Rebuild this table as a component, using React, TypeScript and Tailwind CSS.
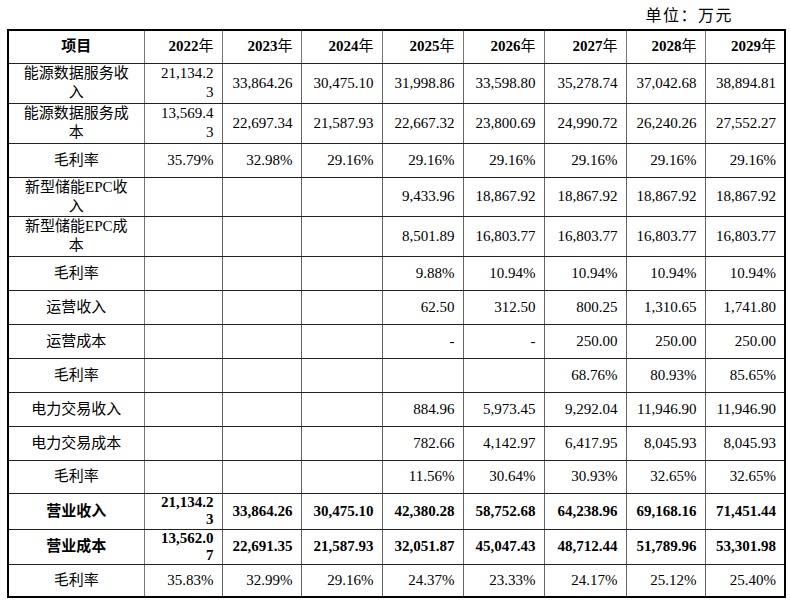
type Row = {
  label: string;
  values: string[];
  h: string;
  bold?: boolean;
  grayTop?: boolean;
};

const rows: Row[] = [
  {
    label: "能源数据服务收入",
    values: ["21,134.2|3", "33,864.26", "30,475.10", "31,998.86", "33,598.80", "35,278.74", "37,042.68", "38,894.81"],
    h: "h-[40px]",
  },
  {
    label: "能源数据服务成本",
    values: ["13,569.4|3", "22,697.34", "21,587.93", "22,667.32", "23,800.69", "24,990.72", "26,240.26", "27,552.27"],
    h: "h-[40px]",
  },
  {
    label: "毛利率",
    values: ["35.79%", "32.98%", "29.16%", "29.16%", "29.16%", "29.16%", "29.16%", "29.16%"],
    h: "h-[34px]",
  },
  {
    label: "新型储能EPC收入",
    values: ["", "", "", "9,433.96", "18,867.92", "18,867.92", "18,867.92", "18,867.92"],
    h: "h-[39px]",
  },
  {
    label: "新型储能EPC成本",
    values: ["", "", "", "8,501.89", "16,803.77", "16,803.77", "16,803.77", "16,803.77"],
    h: "h-[40px]",
    grayTop: true,
  },
  {
    label: "毛利率",
    values: ["", "", "", "9.88%", "10.94%", "10.94%", "10.94%", "10.94%"],
    h: "h-[34px]",
  },
  {
    label: "运营收入",
    values: ["", "", "", "62.50", "312.50", "800.25", "1,310.65", "1,741.80"],
    h: "h-[34px]",
  },
  {
    label: "运营成本",
    values: ["", "", "", "-", "-", "250.00", "250.00", "250.00"],
    h: "h-[34px]",
  },
  {
    label: "毛利率",
    values: ["", "", "", "", "", "68.76%", "80.93%", "85.65%"],
    h: "h-[34px]",
    grayTop: true,
  },
  {
    label: "电力交易收入",
    values: ["", "", "", "884.96", "5,973.45", "9,292.04", "11,946.90", "11,946.90"],
    h: "h-[34px]",
  },
  {
    label: "电力交易成本",
    values: ["", "", "", "782.66", "4,142.97", "6,417.95", "8,045.93", "8,045.93"],
    h: "h-[34px]",
  },
  {
    label: "毛利率",
    values: ["", "", "", "11.56%", "30.64%", "30.93%", "32.65%", "32.65%"],
    h: "h-[33px]",
  },
  {
    label: "营业收入",
    values: ["21,134.2|3", "33,864.26", "30,475.10", "42,380.28", "58,752.68", "64,238.96", "69,168.16", "71,451.44"],
    h: "h-[36px]",
    bold: true,
  },
  {
    label: "营业成本",
    values: ["13,562.0|7", "22,691.35", "21,587.93", "32,051.87", "45,047.43", "48,712.44", "51,789.96", "53,301.98"],
    h: "h-[35px]",
    bold: true,
  },
  {
    label: "毛利率",
    values: ["35.83%", "32.99%", "29.16%", "24.37%", "23.33%", "24.17%", "25.12%", "25.40%"],
    h: "h-[33px]",
  },
];

const years = ["2022", "2023", "2024", "2025", "2026", "2027", "2028", "2029"];

function Value({ text }: { text: string }) {
  if (text.includes("|")) {
    const [a, b] = text.split("|");
    return (
      <>
        {a}
        <br />
        {b}
      </>
    );
  }
  return <>{text}</>;
}

export default function App() {
  return (
    <div
      className="w-[790px] h-[605px] overflow-hidden bg-white px-[7px] text-black"
      style={{ fontFamily: '"Liberation Serif", "Noto Sans CJK SC", serif' }}
    >
      <div className="flex h-[29px] items-center justify-end pr-[50px] pt-[2px] text-[16px] tracking-[1.5px]">
        单位：万元
      </div>
      <table className="w-[777px] table-fixed border-collapse border-[2.5px] border-black text-[15px] leading-[19px]">
        <colgroup>
          <col className="w-[136px]" />
          <col className="w-[78px]" />
          <col className="w-[79px]" />
          <col className="w-[81px]" />
          <col className="w-[81px]" />
          <col className="w-[81px]" />
          <col className="w-[82px]" />
          <col className="w-[79px]" />
          <col className="w-[80px]" />
        </colgroup>
        <thead>
          <tr className="h-[33px]">
            <th className="border border-[#777] border-b-[#222] p-0 px-[12px] text-center font-bold">项目</th>
            {years.map((y) => (
              <th key={y} className="border border-[#777] border-b-[#222] p-0 pr-[8px] text-right font-bold">
                {y}
                <span className="font-normal">年</span>
              </th>
            ))}
          </tr>
        </thead>
        <tbody>
          {rows.map((r, i) => (
            <tr key={i} className={r.h}>
              <td
                className={`border border-x-[#777] p-0 px-[12px] text-center ${
                  r.grayTop ? "border-t-[#999]" : "border-t-[#222]"
                } border-b-[#222] ${r.bold ? "font-bold" : ""}`}
              >
                {r.label}
              </td>
              {r.values.map((v, j) => (
                <td
                  key={j}
                  className={`border border-x-[#666] p-0 pr-[8px] text-right align-middle ${
                    r.grayTop ? "border-t-[#999]" : "border-t-[#222]"
                  } border-b-[#222] ${r.bold ? "font-bold leading-[17px]" : ""}`}
                >
                  <Value text={v} />
                </td>
              ))}
            </tr>
          ))}
        </tbody>
      </table>
    </div>
  );
}
